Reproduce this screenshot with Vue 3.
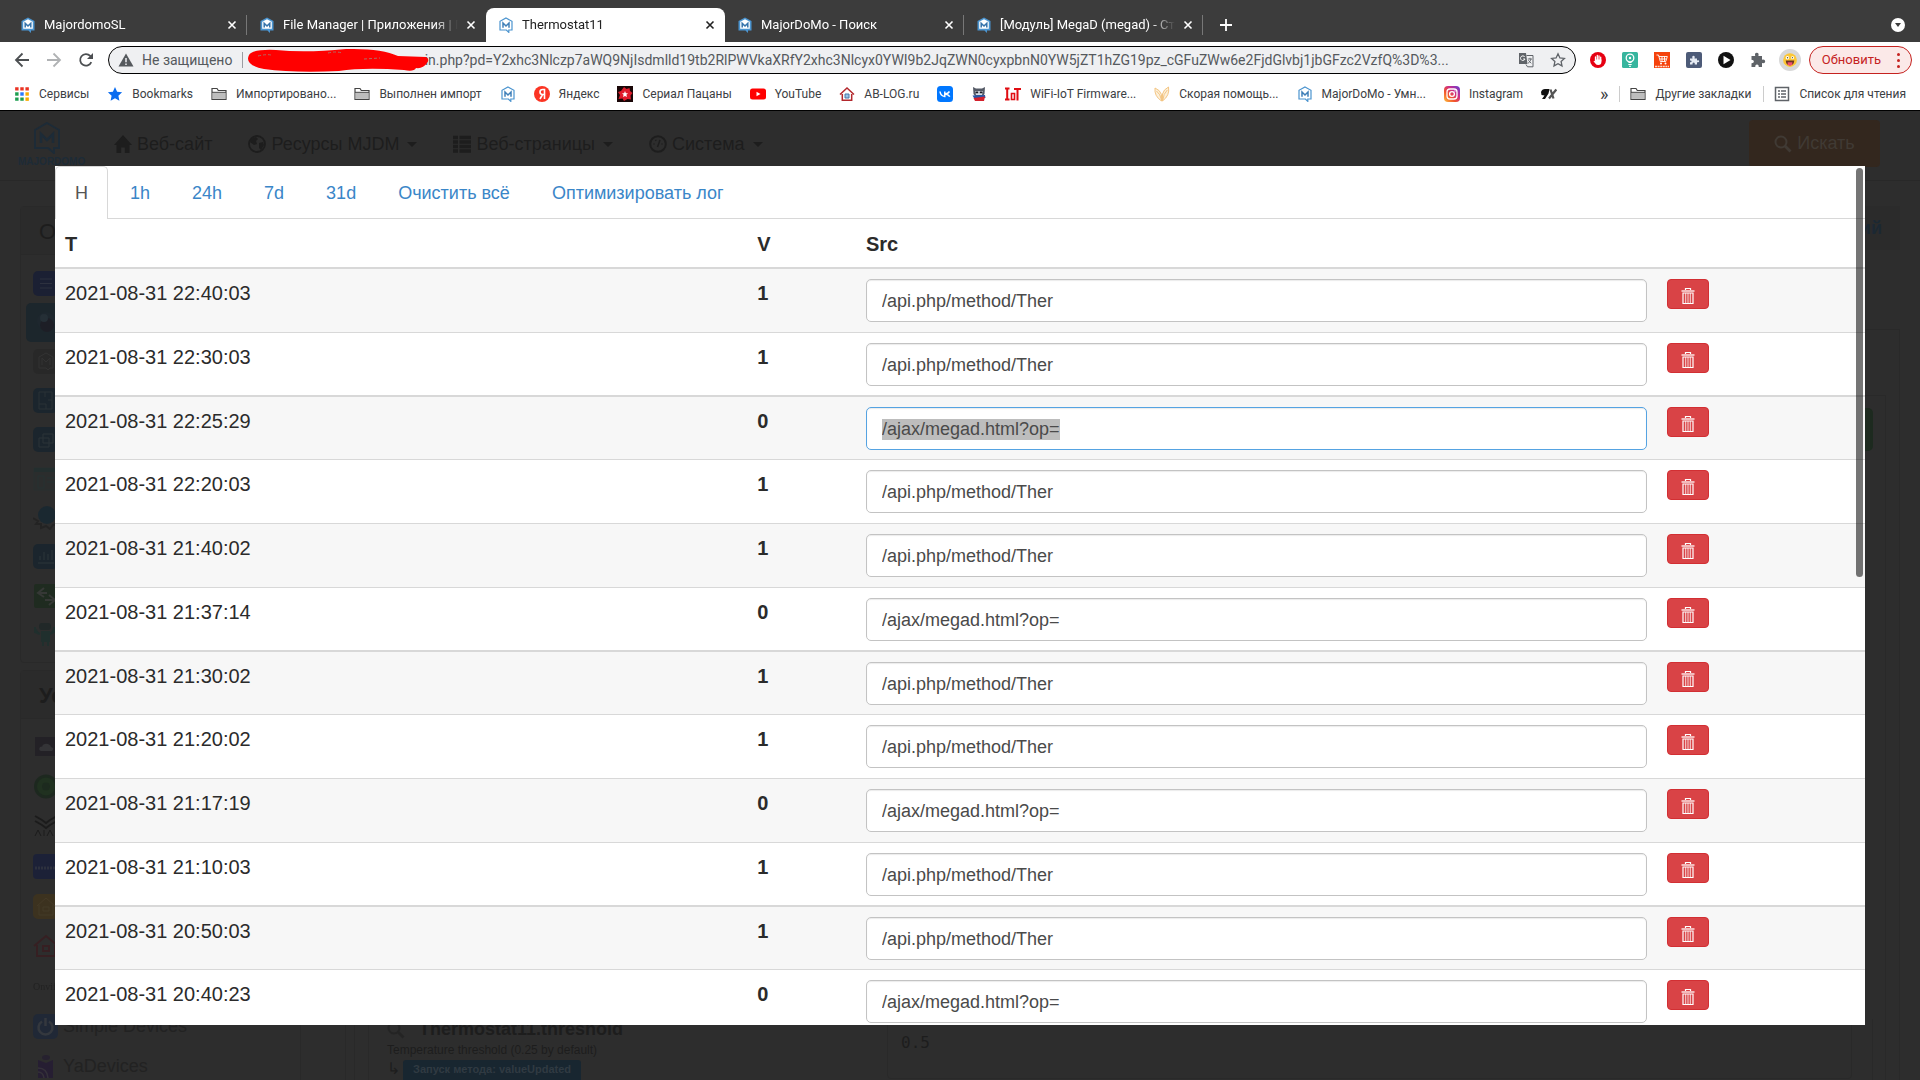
<template>
  <svg class="sprite" aria-hidden="true">
    <defs>
      <linearGradient id="insta-fill" x1="0" y1="1" x2="1" y2="0">
        <stop offset="0" stop-color="#fdc040" />
        <stop offset="0.35" stop-color="#f2552c" />
        <stop offset="0.65" stop-color="#c92c8c" />
        <stop offset="1" stop-color="#5b3fd6" />
      </linearGradient>
    </defs>
    <symbol id="i-mjd" viewBox="0 0 16 16">
      <path d="M8 1 14 4.300V13h-3.200v2.400L8.400 13H2V4.300z" fill="#fff" stroke="#4b94cf" stroke-width="1.200" />
      <path d="M5 10.800V6l3 3 3-3v4.800" fill="none" stroke="#3f7fb8" stroke-width="1.500" />
    </symbol>
    <symbol id="i-mjd-dark" viewBox="0 0 16 16">
      <path d="M8 .5 14.500 4v9.500H11V16l-2.600-2.500H1.500V4z" fill="#4b94cf" />
      <path d="M8 2.200 12.800 4.800v7H3.200v-7z" fill="#fff" />
      <path d="M5.200 10.500V6.200L8 9l2.800-2.800v4.300" fill="none" stroke="#3573ab" stroke-width="1.500" />
    </symbol>
    <symbol id="i-close" viewBox="0 0 10 10">
      <path d="m1.500 1.500 7 7m0-7-7 7" stroke="currentColor" stroke-width="1.600" />
    </symbol>
    <symbol id="i-plus" viewBox="0 0 14 14">
      <path d="M7 1v12M1 7h12" stroke="currentColor" stroke-width="1.800" />
    </symbol>
    <symbol id="i-back" viewBox="0 0 16 16">
      <path d="M15 8H2m6.500-6.500L2 8l6.500 6.500" fill="none" stroke="currentColor" stroke-width="1.800" />
    </symbol>
    <symbol id="i-forward" viewBox="0 0 16 16">
      <path d="M1 8h13M7.500 1.500 14 8l-6.500 6.500" fill="none" stroke="currentColor" stroke-width="1.800" />
    </symbol>
    <symbol id="i-reload" viewBox="0 0 16 16">
      <path d="M13.300 10.200A5.800 5.800 0 1 1 12.200 3.900L14 5.700" fill="none" stroke="currentColor" stroke-width="1.800" />
      <path d="M15 1v6H9z" fill="currentColor" />
    </symbol>
    <symbol id="i-warn" viewBox="0 0 16 16">
      <path d="M8 1.500 15.500 14.500H.5z" fill="currentColor" />
      <path d="M8 6v4.300m0 1.200v1.600" stroke="#eff0f2" stroke-width="1.500" />
    </symbol>
    <symbol id="i-translate" viewBox="0 0 16 16">
      <path d="M1 1h7l1.500 11H1z" fill="#5f6368" />
      <path d="M8.500 3.500H15v11.300H9.500L8 12.500" fill="none" stroke="#5f6368" />
      <path d="M6.800 5A2.300 2.300 0 1 0 7 7H5.200" fill="none" stroke="#fff" />
      <path d="M9.800 7h4.200m-2-1.200V7m1 0q-.7 3-3 4.300m.3-3 3 3" fill="none" stroke="#5f6368" stroke-width=".9" />
    </symbol>
    <symbol id="i-star-line" viewBox="0 0 16 16">
      <path d="m8 1.800 1.900 4.100 4.500.5-3.300 3 .9 4.500L8 11.700l-4 2.200.9-4.500-3.300-3 4.500-.5z" fill="none" stroke="#5f6368" stroke-width="1.300" />
    </symbol>
    <symbol id="i-hand" viewBox="0 0 16 16">
      <circle cx="8" cy="8" r="8" fill="#e60012" />
      <path d="M5.500 9V5m1.800 3V3.500M9 8V4m1.700 5V5.200" stroke="#fff" stroke-width="1.300" stroke-linecap="round" />
      <path d="M4.900 7.500h6.500V10q0 3-3.100 3-2 0-3-1.600L3.500 9.200l.6-.5 1.200.8z" fill="#fff" />
    </symbol>
    <symbol id="i-bulb" viewBox="0 0 16 16">
      <rect width="16" height="16" rx="1.500" fill="#37b59e" />
      <circle cx="8" cy="6" r="3.800" fill="none" stroke="#fff" stroke-width="1.300" />
      <circle cx="8" cy="6" r="1.200" fill="#fff" />
      <path d="M6.500 10.500h3M6.300 12.500h3.400M7 14.300h2" stroke="#fff" />
    </symbol>
    <symbol id="i-cart" viewBox="0 0 16 16">
      <rect width="16" height="16" fill="#f5420b" />
      <path d="M2.500 3h2l1.800 6.500h5.500l1.500-5H5M6 7h6M8 4.500v5m2.500-5v5" fill="none" stroke="#fff" stroke-width=".9" />
      <circle cx="7" cy="11.500" r="1" fill="#fff" />
      <circle cx="11.500" cy="11.500" r="1" fill="#fff" />
      <path d="M1 14.500h14" stroke="#ffd9c9" stroke-width="1.300" stroke-dasharray="2 .6" />
    </symbol>
    <symbol id="i-block" viewBox="0 0 16 16">
      <rect width="16" height="16" rx="2" fill="#4d5b78" />
      <path d="M4 6.500h2.500q-.8-2.800 1-2.800t1 2.800H11v2q2.200-.6 2.200.8T11 10.200v2.300H8.700q.5-2-1-2t-1.200 2H4v-2.300q1.600.3 1.600-.9T4 8.500z" fill="#e6ebf3" />
    </symbol>
    <symbol id="i-play" viewBox="0 0 16 16">
      <circle cx="8" cy="8" r="8" fill="#111" />
      <path d="M5.500 3.800 12.500 8l-7 4.200z" fill="#fff" />
    </symbol>
    <symbol id="i-puzzle" viewBox="0 0 16 16">
      <path d="M1.500 4h3.700q-.8-3.200 1.600-3.200T8.400 4H12v3.700q3.200-.6 3.200 1.700T12 11v4H8.700q.3-2.600-1.700-2.600T5.300 15H1.500v-3.800q2.400.1 2.400-1.600T1.500 7.800z" fill="#5f6368" />
    </symbol>
    <symbol id="i-smile" viewBox="0 0 24 24">
      <circle cx="12" cy="12" r="12" fill="#d8d8d8" />
      <circle cx="12" cy="12" r="7.500" fill="#fcc735" />
      <circle cx="9.200" cy="9.500" r="1.900" fill="#fff" />
      <circle cx="14.800" cy="9.500" r="1.600" fill="#fff" />
      <circle cx="9.300" cy="9.500" r=".8" fill="#553" />
      <circle cx="14.700" cy="9.500" r=".7" fill="#553" />
      <path d="M7.300 12.500h9.400q-.6 5.300-4.700 5.300t-4.700-5.300" fill="#6d3324" />
      <path d="M9.500 14.500h5v2.700q-2.500 2.200-5 0z" fill="#f0506c" />
    </symbol>
    <symbol id="i-apps" viewBox="0 0 14 14">
      <path d="M1 2.500h3M5.500 2.500h3M10 2.500h3" stroke="#ea3323" stroke-width="3" />
      <path d="M1 7h3" stroke="#1e9e50" stroke-width="3" />
      <path d="M5.500 7h3" stroke="#2979ff" stroke-width="3" />
      <path d="M10 7h3" stroke="#f9ab00" stroke-width="3" />
      <path d="M1 11.500h3M5.500 11.500h3" stroke="#1e9e50" stroke-width="3" />
      <path d="M10 11.500h3" stroke="#f9ab00" stroke-width="3" />
    </symbol>
    <symbol id="i-star" viewBox="0 0 16 16">
      <path d="m8 1 2.100 4.700 5 .6-3.700 3.500 1 5L8 12.300l-4.400 2.500 1-5L.9 6.300l5-.6z" fill="#0a6cf0" />
    </symbol>
    <symbol id="i-folder" viewBox="0 0 16 16">
      <path d="M1 13.500V2.500h5l1.300 2H15v9z" fill="#fff" stroke="#444" stroke-width="1.200" />
      <path d="M1.600 6.600h12.800v6.300H1.600z" fill="#bdbdbd" />
      <path d="M1 6.300h14" stroke="#444" />
    </symbol>
    <symbol id="i-ya" viewBox="0 0 16 16">
      <circle cx="8" cy="8" r="8" fill="#fb3423" />
      <path d="M10.500 13V3.500H8.700Q6 3.500 6 6t2.700 2.500h1.800M8.600 8.500 6 13" fill="none" stroke="#fff" stroke-width="1.600" />
    </symbol>
    <symbol id="i-serial" viewBox="0 0 16 16">
      <rect width="16" height="16" fill="#190607" />
      <path d="m7 1 2.500 2 3-1 .5 3 2.500 2-2 2.500.5 4-3.500-.5L7 15l-1.500-2.500-4 .5 1.500-4L1 6l3-1z" fill="#e01b2b" />
      <path d="m8 5 .9 2.200 2.100.1-1.600 1.500.6 2.300L8 10l-2 1.100.6-2.300L5 7.300l2.100-.1z" fill="#fff" />
    </symbol>
    <symbol id="i-youtube" viewBox="0 0 16 16">
      <rect y="2.500" width="16" height="11" rx="2.500" fill="#f00" />
      <path d="M6.500 5.700 10.500 8l-4 2.300z" fill="#fff" />
    </symbol>
    <symbol id="i-house" viewBox="0 0 16 16">
      <path d="M1 8.500 8 2l7 6.500M3.300 8v6.200h9.400V8" fill="none" stroke="#b3282d" stroke-width="1.500" />
      <path d="M6 8h4v4H6z" fill="#9cc4e8" stroke="#4776a8" />
    </symbol>
    <symbol id="i-vk" viewBox="0 0 16 16">
      <rect width="16" height="16" rx="3.500" fill="#07f" />
      <path d="M3 5.500q.6 4.500 4.800 5V5.500m4.700 0Q11 8 8 8q3.400.3 4.800 2.700" fill="none" stroke="#fff" stroke-width="1.500" />
    </symbol>
    <symbol id="i-raccoon" viewBox="0 0 16 16">
      <path d="m2 1 3 1.500h6L14 1l-.5 7-1.500 2H4L2.500 8z" fill="#555a66" />
      <path d="M4 5h8l-1 4H5z" fill="#d8dde6" />
      <path d="M4.500 5.500h2.700v1.700H4.500zm4.300 0h2.700v1.700H8.800z" fill="#1b1d25" />
      <path d="M1.500 9.500 14 9l.5 3H3z" fill="#2857a8" />
      <path d="M2.500 12 14 10.500 13 15H4z" fill="#d3202c" />
    </symbol>
    <symbol id="i-iot" viewBox="0 0 16 16">
      <path d="M0 2.500h4.500M2.200 2v12M0 13.500h4.500M9 3h7M12.500 3v11.500" stroke="#e00d12" stroke-width="2" />
      <path d="M6.500 7.500h3v6h-3z" fill="none" stroke="#e00d12" stroke-width="1.600" />
    </symbol>
    <symbol id="i-leaf" viewBox="0 0 16 16">
      <path d="M7.500 15Q0 10 1 2q5 2 6.500 6.500zM8.500 15Q16 9.500 14.500 1q-5 2.500-6 7zM2.500 5q4 3 5 9M13.300 4q-4 4-4.500 10" fill="#fdf0da" stroke="#f3c583" />
    </symbol>
    <symbol id="i-insta" viewBox="0 0 16 16">
      <rect width="16" height="16" rx="4" fill="url(#insta-fill)" />
      <rect x="3" y="3" width="10" height="10" rx="3" fill="none" stroke="#fff" stroke-width="1.300" />
      <circle cx="8" cy="8" r="2.400" fill="none" stroke="#fff" stroke-width="1.300" />
      <circle cx="11" cy="5" r=".7" fill="#fff" />
    </symbol>
    <symbol id="i-9x" viewBox="0 0 16 16">
      <path d="M0 6q1-3 4-3h4.500L7.500 7.500 4 13H1l2.500-3.500L.5 9z" fill="#111" />
      <path d="m9.500 3.500 3 9M15.300 3.500l-7.300 9" stroke="#555" stroke-width="2.200" />
    </symbol>
    <symbol id="i-list" viewBox="0 0 16 16">
      <path d="M1.500 1.500h13v13h-13z" fill="none" stroke="#5f6368" stroke-width="1.500" />
      <path d="M4 5h2m1 0h5M4 8h2m1 0h5m-8 3h2m1 0h5" stroke="#5f6368" stroke-width="1.500" />
    </symbol>
    <symbol id="i-trash" viewBox="0 0 16 18">
      <path d="M5.500 3V1.500h5V3" fill="none" stroke="#fff" stroke-width="1.200" />
      <path d="M1.500 4h13" stroke="#f6c9ca" stroke-width="1.800" />
      <path d="M3 6h10v10.500H3z" fill="none" stroke="#fff" stroke-width="1.200" />
      <path d="M5.700 6v10M8 6v10m2.300-10v10" stroke="#fff" stroke-width=".8" />
    </symbol>
    <symbol id="i-home" viewBox="0 0 18 18">
      <path d="m9 0 9 10h-2.500v8h-4.700v-5.500H7.200V18H2.500v-8H0z" fill="currentColor" />
    </symbol>
    <symbol id="i-globe" viewBox="0 0 18 18">
      <circle cx="9" cy="9" r="8" fill="none" stroke="currentColor" stroke-width="1.800" />
      <path d="m3 4 5-2 2 2-2 2 1 3-3 1-4-3zm8 4 4-1 1 3-3 5-2-2z" fill="currentColor" />
    </symbol>
    <symbol id="i-rows" viewBox="0 0 18 18">
      <path d="M0 2.500h5m1.500 0H18M0 7h5m1.500 0H18M0 11.500h5m1.500 0H18M0 16h5m1.500 0H18" stroke="currentColor" stroke-width="3.400" />
    </symbol>
    <symbol id="i-gauge" viewBox="0 0 18 18">
      <circle cx="9" cy="9" r="7.800" fill="none" stroke="currentColor" stroke-width="2" />
      <path d="m8.500 12 2.500-7M4.500 9h1m1-4 .6.900M12.500 9h1" stroke="currentColor" stroke-width="1.500" />
    </symbol>
    <symbol id="i-search" viewBox="0 0 18 18">
      <circle cx="7" cy="7" r="5.500" fill="none" stroke="currentColor" stroke-width="2" />
      <path d="m11 11 5.500 5.500" stroke="currentColor" stroke-width="2.800" />
    </symbol>
    <symbol id="s-menu" viewBox="0 0 25 25">
      <rect width="25" height="25" rx="5" fill="#141b36" />
      <path d="M7 8h12M7 12.500h12M7 17h12" stroke="#2d3447" />
    </symbol>
    <symbol id="s-objects" viewBox="0 0 25 25">
      <circle cx="13" cy="11" r="9" fill="#1f2830" />
      <circle cx="14" cy="15" r="7" fill="#1e1c24" />
      <circle cx="11" cy="8" r="4" fill="#29333b" />
    </symbol>
    <symbol id="s-mjd" viewBox="0 0 25 25">
      <rect width="25" height="25" rx="5" fill="#272727" />
      <path d="m13 4 7 4v11h-3l-2 2-2-2H6V8z" fill="none" stroke="#353535" />
      <path d="M9 16V9l4 4 4-4v7" fill="none" stroke="#353535" />
    </symbol>
    <symbol id="s-plan" viewBox="0 0 25 25">
      <rect width="25" height="25" rx="5" fill="#14232d" />
      <path d="M6 4h13v8h-4m4 0v9H6V4m0 12h7v5M12 4v5" fill="none" stroke="#29353d" />
    </symbol>
    <symbol id="s-copy" viewBox="0 0 25 25">
      <rect width="25" height="25" rx="5" fill="#14232d" />
      <path d="M10 7h10v9H10zM6 11h10v9H6z" fill="none" stroke="#2b373e" />
    </symbol>
    <symbol id="s-site" viewBox="0 0 25 25">
      <path d="M1 2h24v22H1z" fill="#2b2e2e" stroke="#263030" />
      <path d="M1 4h24" stroke="#1f2f2f" stroke-width="4" />
      <path d="M5 10h6v12H5zm9 2h8M14 16h8" fill="none" stroke="#243535" />
    </symbol>
    <symbol id="s-ball" viewBox="0 0 25 25">
      <circle cx="14" cy="10" r="9" fill="#132632" />
      <path d="m0 13 5 3-2 3h5v4l5-2 4 3 3-4 5-1" fill="none" stroke="#202020" stroke-width="2" />
    </symbol>
    <symbol id="s-chart" viewBox="0 0 25 25">
      <rect width="25" height="25" rx="5" fill="#14232d" />
      <path d="M5 19h16M7 16v-4m4 4V8m4 8v-6m4 6V6" stroke="#2c3940" />
    </symbol>
    <symbol id="s-swap" viewBox="0 0 25 25">
      <rect x="1" y="1" width="24" height="24" rx="2" fill="#1a2b1b" />
      <path d="m11 5-6 5 6 4m-6-4h9M16 12l6 5-6 5m6-5H12" fill="none" stroke="#3a3d3a" stroke-width="2" />
    </symbol>
    <symbol id="s-robot" viewBox="0 0 25 25">
      <rect x="6" y="1" width="12" height="7" rx="3" fill="#1c2727" />
      <path d="M2 5v5l5 2m14-7v5l-4 2M9 10h7v9H9zm1 9v5m5-5v5" fill="#1b302e" stroke="#1b302e" stroke-width="2" />
    </symbol>
    <symbol id="s-cloud" viewBox="0 0 25 25">
      <rect x="2" y="3" width="23" height="19" fill="#201d24" />
      <path d="M8 17q-3-1-1-4 2-1 2 0 1-4 6-3 3 1 3 3 4 1 1 4z" fill="#37373c" />
    </symbol>
    <symbol id="s-green" viewBox="0 0 25 25">
      <circle cx="13" cy="12.500" r="12" fill="#17271a" />
      <circle cx="13" cy="12.500" r="9" fill="#1b341b" />
      <circle cx="13" cy="12.500" r="4" fill="#162918" />
    </symbol>
    <symbol id="s-ajax" viewBox="0 0 25 25">
      <path d="m2 2 7 4 4 3 4-3 7-4M2 7l7 4 4 3 4-3 7-4" fill="none" stroke="#141414" stroke-width="2" />
      <path d="m2 22 3-6 3 6m3-6v6M14 22l3-6 3 6" fill="none" stroke="#141414" />
    </symbol>
    <symbol id="s-arduino" viewBox="0 0 25 25">
      <rect width="25" height="25" rx="4" fill="#161d3c" />
      <path d="M2 14h22" stroke="#2d3346" stroke-width="3" stroke-dasharray="2 1" />
    </symbol>
    <symbol id="s-yellow" viewBox="0 0 25 25">
      <rect width="25" height="25" rx="5" fill="#43351a" />
      <path d="m4 12 9-8 9 8M6 11v10h14V11M10 13h6v4h-6z" fill="none" stroke="#4f4025" />
    </symbol>
    <symbol id="s-redhouse" viewBox="0 0 25 25">
      <path d="m1 12 12-10 12 10M4 11v11h18V11M10 12h6v5h-6z" fill="none" stroke="#3a1a1e" stroke-width="2" />
    </symbol>
    <symbol id="s-power" viewBox="0 0 25 25">
      <rect width="25" height="25" rx="5" fill="#1b273a" />
      <path d="M9 7.500a7 7 0 1 0 7 0M12.500 4v8" fill="none" stroke="#383d46" stroke-width="2.500" />
    </symbol>
    <symbol id="s-ya" viewBox="0 0 25 25">
      <ellipse cx="13" cy="3.500" rx="4" ry="2.500" fill="#241c30" />
      <path d="m5 6 8 3 7-3v18H5z" fill="#241835" />
      <path d="M5 14q9 0 10 10M5 18q5 0 6 6" fill="none" stroke="#38333f" stroke-width="1.500" />
    </symbol>
  </svg>

  <div class="window">
    <header class="chrome">
      <div class="tab-strip">
        <div v-for="tab in tabs" :key="tab.title" class="tab" :class="{ active: tab.active }">
          <svg class="icon16"><use :href="tab.active ? '#i-mjd' : '#i-mjd-dark'" /></svg>
          <span class="tab-title">{{ tab.title }}</span>
          <button class="plain tab-close" aria-label="Закрыть"><svg><use href="#i-close" /></svg></button>
        </div>
        <button class="plain new-tab" aria-label="Новая вкладка"><svg><use href="#i-plus" /></svg></button>
        <button class="plain tab-search" aria-label="Поиск вкладок"><i class="caret"></i></button>
      </div>

      <div class="toolbar">
        <button class="plain nav-btn" aria-label="Назад"><svg class="icon16"><use href="#i-back" /></svg></button>
        <button class="plain nav-btn off" aria-label="Вперёд"><svg class="icon16"><use href="#i-forward" /></svg></button>
        <button class="plain nav-btn" aria-label="Обновить страницу"><svg class="icon16"><use href="#i-reload" /></svg></button>
        <div class="address">
          <svg class="icon16"><use href="#i-warn" /></svg>
          <span class="insecure">Не защищено</span>
          <span class="url">{{ url }}</span>
          <svg class="scribble" viewBox="0 0 184 26">
            <path d="M3 8Q6 2 30 3q30 3 70-1 35-1 52 7l28 1q4 2 1 6-4 6-11 5-2 4-12 2-40-3-65 1-45 2-75-2Q-2 18 3 8z" fill="#f00" />
            <path d="M12 9q8-2 13-1M82 6q8-2 14 0M118 12l16-1" stroke="#b06c65" stroke-dasharray="3 2" fill="none" />
          </svg>
          <svg class="icon16"><use href="#i-translate" /></svg>
          <svg class="icon16"><use href="#i-star-line" /></svg>
        </div>
        <svg v-for="ext in extensions" :key="ext" class="icon16"><use :href="'#i-' + ext" /></svg>
        <svg class="avatar"><use href="#i-smile" /></svg>
        <button class="update">Обновить <span class="dots"><i></i><i></i><i></i></span></button>
      </div>

      <nav class="bookmarks">
        <a v-for="(mark, i) in bookmarks" :key="i" href="#">
          <svg class="icon16"><use :href="'#i-' + mark.icon" /></svg><span v-if="mark.text">{{ mark.text }}</span>
        </a>
        <span class="more">»</span>
        <a href="#" class="divided"><svg class="icon16"><use href="#i-folder" /></svg><span>Другие закладки</span></a>
        <a href="#" class="divided"><svg class="icon16"><use href="#i-list" /></svg><span>Список для чтения</span></a>
      </nav>
    </header>

    <main class="viewport">
      <div class="page">
        <div class="navbar">
          <div class="brand">
            <svg viewBox="0 0 28 32">
              <path d="m14 1 12 7v18h-5v5l-6-5H2V8z" fill="none" stroke="#1d2b37" stroke-width="2" />
              <path d="M8 21v-9l6 6 6-6v9" fill="none" stroke="#1d2b37" stroke-width="2.500" />
            </svg>
            <b>MAJORDOMO</b>
          </div>
          <a v-for="item in menu" :key="item.text" href="#" class="menu-item">
            <svg><use :href="'#i-' + item.icon" /></svg>{{ item.text }}<i v-if="item.drop" class="caret"></i>
          </a>
          <button class="search"><svg><use href="#i-search" /></svg> Искать</button>
        </div>

        <div class="columns">
          <aside class="sidebar">
            <section class="panel">
              <h4>О</h4>
              <ul>
                <li v-for="icon in objectIcons" :key="icon" :class="{ current: icon === 'objects' }">
                  <svg><use :href="'#s-' + icon" /></svg>
                </li>
              </ul>
            </section>
            <section class="panel">
              <h4><b>Ус</b></h4>
              <ul>
                <li v-for="device in devices" :key="device.icon">
                  <svg v-if="device.icon !== 'onvif'"><use :href="'#s-' + device.icon" /></svg>
                  <small v-else>Onvif</small>
                  <span>{{ device.text }}</span>
                </li>
              </ul>
            </section>
          </aside>

          <section class="content">
            <div class="crumbs"><b>ий</b></div>
            <div class="frame">
              <div class="frame-inner">
                <button class="add" aria-label="Добавить"></button>
                <div class="property">
                  <div class="prop-name">
                    <svg><use href="#i-search" /></svg>
                    <b>Thermostat11.threshold</b>
                    <p>Temperature threshold (0.25 by default)</p>
                    <div class="method">↳ <span>Запуск метода: valueUpdated</span></div>
                  </div>
                  <textarea aria-label="threshold" readonly>0.5</textarea>
                </div>
              </div>
            </div>
          </section>
        </div>
      </div>

      <div class="lightbox">
        <nav class="periods">
          <a v-for="(period, i) in periods" :key="period" href="#" :class="{ active: i === 0 }">{{ period }}</a>
        </nav>
        <table>
          <colgroup>
            <col class="col-time" />
            <col class="col-value" />
            <col class="col-src" />
            <col />
          </colgroup>
          <thead>
            <tr>
              <th>T</th>
              <th>V</th>
              <th>Src</th>
              <th></th>
            </tr>
          </thead>
          <tbody>
            <tr v-for="(row, i) in rows" :key="row.time">
              <td>{{ row.time }}</td>
              <td><b>{{ row.value }}</b></td>
              <td><input ref="sources" type="text" :value="row.value ? API_SRC : AJAX_SRC" :aria-label="'Src ' + row.time" :class="{ picked: i === PICKED_ROW }" /></td>
              <td><button class="delete" aria-label="Удалить"><svg><use href="#i-trash" /></svg></button></td>
            </tr>
          </tbody>
        </table>
        <div class="scroll-thumb"></div>
      </div>
    </main>
  </div>
</template>

<script setup>
import { ref, onMounted } from 'vue';

const API_SRC = '/api.php/method/Ther';
const AJAX_SRC = '/ajax/megad.html?op=';
// Строка, в которой выделен текст источника
const PICKED_ROW = 2;

const url =
  'min.php?pd=Y2xhc3Nlczp7aWQ9NjIsdmlld19tb2RlPWVkaXRfY2xhc3Nlcyx0YWI9b2JqZWN0cyxpbnN0YW5jZT1hZG19pz_cGFuZWw6e2FjdGlvbj1jbGFzc2VzfQ%3D%3...';

const tabs = [
  { title: 'MajordomoSL' },
  { title: 'File Manager | Приложения | П' },
  { title: 'Thermostat11', active: true },
  { title: 'MajorDoMo - Поиск' },
  { title: '[Модуль] MegaD (megad) - Ст' },
];

const extensions = ['hand', 'bulb', 'cart', 'block', 'play', 'puzzle'];

const bookmarks = [
  { icon: 'apps', text: 'Сервисы' },
  { icon: 'star', text: 'Bookmarks' },
  { icon: 'folder', text: 'Импортировано...' },
  { icon: 'folder', text: 'Выполнен импорт' },
  { icon: 'mjd' },
  { icon: 'ya', text: 'Яндекс' },
  { icon: 'serial', text: 'Сериал Пацаны' },
  { icon: 'youtube', text: 'YouTube' },
  { icon: 'house', text: 'AB-LOG.ru' },
  { icon: 'vk' },
  { icon: 'raccoon' },
  { icon: 'iot', text: 'WiFi-IoT Firmware...' },
  { icon: 'leaf', text: 'Скорая помощь...' },
  { icon: 'mjd', text: 'MajorDoMo - Умн...' },
  { icon: 'insta', text: 'Instagram' },
  { icon: '9x' },
];

const menu = [
  { icon: 'home', text: 'Веб-сайт' },
  { icon: 'globe', text: 'Ресурсы MJDM', drop: true },
  { icon: 'rows', text: 'Веб-страницы', drop: true },
  { icon: 'gauge', text: 'Система', drop: true },
];

const objectIcons = ['menu', 'objects', 'mjd', 'plan', 'copy', 'site', 'ball', 'chart', 'swap', 'robot'];

const devices = [
  { icon: 'cloud' },
  { icon: 'green' },
  { icon: 'ajax' },
  { icon: 'arduino' },
  { icon: 'yellow' },
  { icon: 'redhouse' },
  { icon: 'onvif' },
  { icon: 'power', text: 'Simple Devices' },
  { icon: 'ya', text: 'YaDevices' },
];

const periods = ['H', '1h', '24h', '7d', '31d', 'Очистить всё', 'Оптимизировать лог'];

const rows = [
  { time: '2021-08-31 22:40:03', value: 1 },
  { time: '2021-08-31 22:30:03', value: 1 },
  { time: '2021-08-31 22:25:29', value: 0 },
  { time: '2021-08-31 22:20:03', value: 1 },
  { time: '2021-08-31 21:40:02', value: 1 },
  { time: '2021-08-31 21:37:14', value: 0 },
  { time: '2021-08-31 21:30:02', value: 1 },
  { time: '2021-08-31 21:20:02', value: 1 },
  { time: '2021-08-31 21:17:19', value: 0 },
  { time: '2021-08-31 21:10:03', value: 1 },
  { time: '2021-08-31 20:50:03', value: 1 },
  { time: '2021-08-31 20:40:23', value: 0 },
];

const sources = ref([]);

onMounted(() => {
  const field = sources.value[PICKED_ROW];
  field.focus({ preventScroll: true });
  field.select();
});
</script>

<style>
body {
  margin: 0;
  background: #2d2d2d;
}
</style>

<style scoped>
.sprite {
  position: absolute;
  width: 0;
  height: 0;
}

.window {
  display: flex;
  flex-direction: column;
  height: 100vh;
  overflow: hidden;
  font-family: "Liberation Sans", Arial, sans-serif;
}

.window * {
  box-sizing: border-box;
}

.window svg {
  flex: none;
}

a {
  text-decoration: none;
}

.plain {
  display: flex;
  align-items: center;
  justify-content: center;
  padding: 0;
  border: 0;
  background: none;
  color: inherit;
}

.icon16 {
  width: 16px;
  height: 16px;
}

.caret {
  border: 5px solid transparent;
  border-top-color: currentColor;
  border-bottom: 0;
}

/* Окно браузера */
.chrome {
  flex: none;
  height: 111px;
  border-bottom: 1px solid #000;
  background: #fff;
  font: 13px/16px Roboto, "Noto Sans", sans-serif;
  color: #3c4043;
}

.tab-strip {
  display: flex;
  height: 42px;
  padding: 8px 15px 0 8px;
  background: #3c3c3c;
  color: #fff;
}

.tab {
  display: flex;
  align-items: center;
  width: 239px;
  height: 34px;
  padding: 0 10px 0 12px;
  gap: 8px;
}

.tab:nth-child(1),
.tab:nth-child(4),
.tab:nth-child(5) {
  background: linear-gradient(#777, #777) right center / 1px 20px no-repeat;
}

.tab.active {
  border-radius: 8px 8px 0 0;
  background: #fff;
  color: #222;
}

.tab-title {
  flex: 1;
  overflow: hidden;
  white-space: nowrap;
  mask-image: linear-gradient(90deg, #000 calc(100% - 24px), transparent);
}

.tab-close svg {
  width: 10px;
  height: 10px;
}

.new-tab {
  width: 46px;
}

.new-tab svg {
  width: 14px;
  height: 14px;
}

.tab-search {
  align-self: center;
  width: 14px;
  height: 14px;
  margin-left: auto;
  border-radius: 50%;
  background: #fff;
  color: #3c3c3c;
}

.tab-search .caret {
  border-width: 4px 3px 0;
}

.toolbar {
  display: flex;
  align-items: center;
  height: 36px;
  padding: 0 8px 0 14px;
  gap: 16px;
}

.nav-btn {
  color: #4c4f52;
}

.nav-btn.off {
  color: #b0b2b4;
}

.address {
  position: relative;
  display: flex;
  flex: 1;
  align-items: center;
  min-width: 0;
  height: 28px;
  margin: 0 -2px;
  padding: 0 9px;
  border: 1px solid #000;
  border-radius: 14px;
  background: #eff0f2;
  color: #55595d;
  font-size: 14px;
  gap: 16px;
}

.insecure {
  margin-left: -8px;
  padding-right: 10px;
  border-right: 1px solid #9a9da1;
}

.url {
  flex: 1;
  min-width: 0;
  margin-left: 153px;
  overflow: hidden;
  white-space: nowrap;
}

.scribble {
  position: absolute;
  left: 137px;
  top: 0;
  width: 184px;
  height: 26px;
}

.avatar {
  width: 22px;
  height: 22px;
  margin: 0 -8px 0 -3px;
}

.update {
  display: flex;
  align-items: center;
  height: 28px;
  padding: 0 11px 0 12px;
  border: 1px solid #c5221f;
  border-radius: 14px;
  background: #fbe9e8;
  color: #c5221f;
  font: inherit;
  gap: 16px;
}

.dots {
  display: grid;
  gap: 3px;
}

.dots i {
  width: 3px;
  height: 3px;
  border-radius: 50%;
  background: currentColor;
}

.bookmarks {
  display: flex;
  align-items: center;
  height: 32px;
  padding: 0 14px;
  font-size: 12px;
  gap: 18px;
}

.bookmarks a {
  display: flex;
  align-items: center;
  color: inherit;
  white-space: nowrap;
  gap: 9px;
}

.more {
  margin-left: auto;
  margin-right: -7px;
  font-size: 18px;
}

.divided {
  padding-left: 10px;
  border-left: 1px solid #ccc;
}

.divided + .divided {
  margin-left: -6px;
}

/* Затемнённая страница под окном истории */
.viewport {
  position: relative;
  flex: 1;
  min-height: 0;
  overflow: hidden;
  background: #2d2d2d;
}

.page {
  height: 100%;
  display: flex;
  flex-direction: column;
  color: #1d1d1d;
  font-size: 18px;
}

.navbar {
  display: flex;
  flex: none;
  height: 70px;
  padding: 0 40px 0 18px;
  border-bottom: 1px solid #282828;
}

.brand {
  width: 58px;
  margin-right: 38px;
  padding-top: 11px;
  color: #1d2b37;
  font-size: 10px;
  text-align: center;
}

.brand svg {
  width: 28px;
  height: 32px;
}

.menu-item {
  display: flex;
  align-items: center;
  height: 66px;
  margin-right: 36px;
  color: inherit;
  gap: 5px;
}

.menu-item svg,
.search svg,
.prop-name svg {
  width: 18px;
  height: 18px;
}

.menu-item .caret {
  margin-left: 3px;
}

.search {
  display: flex;
  align-items: center;
  justify-content: center;
  width: 131px;
  height: 47px;
  margin: 9px 0 0 auto;
  border: 0;
  border-radius: 4px;
  background: #33271e;
  color: #403a34;
  font: inherit;
  gap: 5px;
}

.columns {
  display: flex;
  flex: 1;
  min-height: 0;
  margin: 25px 20px 0;
  gap: 44px;
}

.sidebar {
  flex: none;
  width: 281px;
}

.panel {
  height: 457px;
  margin-bottom: 7px;
  border: 1px solid #292929;
  border-radius: 4px;
}

.panel h4 {
  height: 48px;
  margin: 0;
  padding: 0 18px;
  border-bottom: 1px solid #292929;
  background: #2b2b2b;
  font-size: 22px;
  font-weight: 400;
  line-height: 50px;
}

.panel ul {
  margin: 0;
  padding: 9px 5px;
  list-style: none;
}

.panel li {
  display: flex;
  align-items: center;
  height: 39px;
  padding-left: 7px;
  border-radius: 5px;
  gap: 5px;
}

.panel + .panel li {
  height: 40px;
}

.panel + .panel ul {
  padding-top: 7px;
}

.panel li.current {
  background: #1c262c;
}

.panel li span {
  color: #222;
}

.panel li svg,
.panel li small {
  width: 25px;
  height: 25px;
  opacity: 0.7;
}

.panel li small {
  overflow: hidden;
  font: 10px/25px "Liberation Serif", serif;
}

.content {
  display: flex;
  flex: 1;
  flex-direction: column;
}

.crumbs {
  height: 44px;
  padding-right: 18px;
  background: #2b2b2b;
  color: #1b2833;
  line-height: 44px;
  text-align: right;
}

.frame {
  display: flex;
  flex: 1;
  margin-top: 79px;
  padding: 65px 13px 0 8px;
  border: solid #292929;
  border-width: 1px 1px 0;
}

.frame-inner {
  display: flex;
  flex: 1;
  flex-direction: column;
  justify-content: space-between;
  padding: 12px 12px 0 13px;
  border: solid #292929;
  border-width: 1px 1px 0;
}

.add {
  align-self: flex-end;
  width: 120px;
  height: 43px;
  border: 0;
  border-radius: 5px;
  background: #1d2a1f;
}

.property {
  display: flex;
  border: solid #292929;
  border-width: 0 1px;
}

.prop-name {
  width: 518px;
  padding-left: 18px;
}

.prop-name > svg {
  margin-right: 14px;
  color: #242424;
  vertical-align: middle;
}

.prop-name p {
  margin: 0;
  font-size: 12px;
  line-height: 20px;
}

.method {
  display: flex;
  height: 20px;
  font-size: 16px;
  line-height: 18px;
  gap: 3px;
}

.method span {
  padding: 0 10px;
  border-radius: 3px 3px 0 0;
  background: #182630;
  color: #303a42;
  font-size: 11px;
  font-weight: 700;
}

.property textarea {
  flex: 1;
  height: 60px;
  margin: 0 20px 0 0;
  padding: 13px 13px 0;
  border: 1px solid #292929;
  border-radius: 4px;
  background: none;
  color: inherit;
  font: 16px/20px "DejaVu Sans Mono", monospace;
  resize: none;
}

/* Окно истории значений */
.lightbox {
  position: absolute;
  inset: 55px;
  overflow: hidden;
  background: #fff;
  color: #2b2b2b;
}

.periods {
  display: flex;
  height: 53px;
  border-bottom: 1px solid #d8d8d8;
  font-size: 18px;
  line-height: 52px;
  gap: 2px;
}

.periods a {
  height: 53px;
  padding: 0 19px;
  border: solid transparent;
  border-width: 1px 1px 0;
  color: #3a86c8;
}

.periods a.active {
  border-color: #d8d8d8;
  border-radius: 5px 5px 0 0;
  background: #fff;
  color: #555;
}

table {
  width: 100%;
  border-spacing: 0;
  table-layout: fixed;
  font-size: 20px;
  line-height: 28px;
}

.col-time {
  width: 38.25%;
}

.col-value {
  width: 6%;
}

.col-src {
  width: 44.25%;
}

th,
td {
  padding: 10px 10px 0;
  border-bottom: 1px solid #d8d8d8;
  text-align: left;
  vertical-align: top;
}

th {
  height: 50px;
  padding-top: 11px;
  border-bottom-width: 2px;
}

td {
  height: 64px;
}

tbody tr:nth-child(odd) {
  background: #f7f7f7;
}

tbody tr:nth-child(4n + 2) td {
  border-bottom-width: 2px;
}

tbody tr:nth-child(4n + 3) td {
  height: 63px;
}

td input {
  display: block;
  width: 100%;
  height: 43px;
  padding: 1px 15px 0;
  border: 1px solid #c3c3c3;
  border-radius: 5px;
  outline: 0;
  background: #fff;
  box-shadow: inset 0 1px 1px rgba(0, 0, 0, 0.08);
  color: #4a4a4a;
  font: 18px "Liberation Sans", Arial, sans-serif;
}

td input.picked {
  border-color: #55a3e2;
}

td input::selection {
  background: #bdbdbd;
  color: #4a4a4a;
}

.delete {
  display: flex;
  align-items: center;
  justify-content: center;
  width: 42px;
  height: 30px;
  padding: 4px 0 0;
  border: 1px solid #d22f33;
  border-radius: 4px;
  background: #d94346;
}

.delete svg {
  width: 16px;
  height: 18px;
}

.scroll-thumb {
  position: absolute;
  top: 2px;
  right: 2px;
  width: 7px;
  height: 409px;
  border-radius: 4px;
  background: rgba(0, 0, 0, 0.54);
}
</style>
